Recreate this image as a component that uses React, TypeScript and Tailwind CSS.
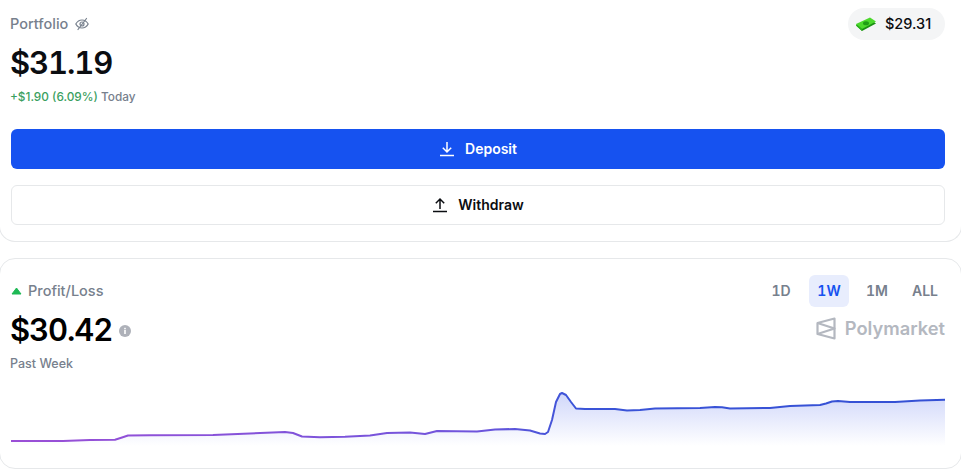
const linePoints: [number, number][] = [
    [11, 441], [63, 441], [90, 440], [115, 439.7], [122, 437.5], [128, 435.5], [150, 435.3], [213, 435], [250, 433.5],
    [285, 432], [293, 433], [302, 436.5], [320, 437.3], [345, 436.8], [370, 435.5], [387, 433], [410, 432.5], [425, 434],
    [437, 431], [477, 431.5], [495, 429.5], [515, 429], [530, 430.5], [540, 433.5], [545, 434], [548, 432], [552, 420],
    [556, 402], [560, 394], [562, 393], [566, 395], [571, 402], [576, 408.5], [585, 409], [615, 409], [627, 410.5],
    [640, 410], [655, 408.5], [700, 408], [715, 407], [722, 407.3], [730, 408.5], [770, 408], [790, 406], [820, 405],
    [826, 403.5], [832, 401.5], [838, 401], [850, 402], [895, 402], [920, 400.5], [945, 399.8],
];

const TOP = 380;
const linePath = linePoints.map(([x, y], i) => `${i === 0 ? 'M' : 'L'}${x} ${y - TOP}`).join(' ');
const areaPath = `${linePath} L945 66 L11 66 Z`;

function PnlChart() {
    return (
        <svg width="961" height="70" viewBox="0 0 961 70" className="block">
            <defs>
                <linearGradient id="stroke" gradientUnits="userSpaceOnUse" x1="11" y1="0" x2="945" y2="0">
                    <stop offset="0" stopColor="#9b4fd6" />
                    <stop offset="0.5" stopColor="#6f55dc" />
                    <stop offset="0.6" stopColor="#3b54d8" />
                    <stop offset="1" stopColor="#3450d4" />
                </linearGradient>
                <linearGradient id="fill" gradientUnits="userSpaceOnUse" x1="0" y1="12" x2="0" y2="66">
                    <stop offset="0" stopColor="#cfd6fa" />
                    <stop offset="1" stopColor="#ffffff" />
                </linearGradient>
            </defs>
            <path d={areaPath} fill="url(#fill)" />
            <path d={linePath} fill="none" stroke="url(#stroke)" strokeWidth="2" strokeLinejoin="round" />
        </svg>
    );
}

function CashIcon() {
    return (
        <svg width="22" height="16" viewBox="0 0 22 16">
            <path d="M1 9.5 L15 3 L21 7.5 L7 15 Z" fill="#1a8f12" />
            <path d="M1 8 L15 1.5 L21 5.5 L7 13 Z" fill="#4cd92c" />
            <ellipse cx="11" cy="7.2" rx="3" ry="2" fill="#1f9e14" />
            <path d="M1 8 L7 13 L7 15 L1 9.5 Z" fill="#2bb51c" />
        </svg>
    );
}

function PolymarketLogo() {
    return (
        <svg width="20" height="23" viewBox="0 0 20 23" fill="none" stroke="#b4b8c0" strokeWidth="2.2" strokeLinejoin="round">
            <path d="M1.5 6 L18.5 1.5 V21.5 L1.5 17 Z" />
            <path d="M1.5 6 L18.5 11.5 L1.5 17" />
        </svg>
    );
}

function HiddenEye() {
    return (
        <svg width="14" height="14" viewBox="0 0 14 14" fill="none" stroke="#77808d" strokeWidth="1.2" strokeLinecap="round">
            <path d="M0.8 7 C2.5 4 4.5 3 7 3 C9.5 3 11.5 4 13.2 7 C11.5 10 9.5 11 7 11 C4.5 11 2.5 10 0.8 7 Z" />
            <circle cx="7" cy="7" r="2" />
            <path d="M3 12.5 L11.5 1.5" />
        </svg>
    );
}

function TrayArrow({ up }: { up?: boolean }) {
    return (
        <svg width="16" height="16" viewBox="0 0 16 16" fill="none" stroke="currentColor" strokeWidth="1.5">
            {up ? <path d="M8 12 V2 M3.8 6.2 L8 2 L12.2 6.2" /> : <path d="M8 1 V11 M3.8 6.8 L8 11 L12.2 6.8" />}
            <path d="M1 14.5 H15" />
        </svg>
    );
}

export default function App() {
    return (
        <div className="w-[961px] h-[473px] overflow-hidden bg-white font-['Inter',sans-serif]">
            <div className="-mx-px h-[242px] border-b border-x border-[#e6e8ea] rounded-b-2xl pl-[11px] pr-[16px] pt-[12px]">
                <div className="flex justify-between items-start">
                    <div className="-ml-px">
                        <div className="flex items-center gap-[7px] h-[24px] text-[14.5px] font-medium text-[#77808d]">
                            Portfolio
                            <HiddenEye />
                        </div>
                        <div className="mt-[3px] h-[48px] flex items-center text-[31px] font-semibold text-[#0b0d11] tabular-nums tracking-[-1.1px]">$31.19</div>
                        <div className="mt-[2px] text-[11.8px] font-medium">
                            <span className="text-[#3b9f5f]">+$1.90 (6.09%)</span> <span className="text-[#77808d]">Today</span>
                        </div>
                    </div>
                    <div className="-mt-[4px] flex items-center gap-[8px] w-[97px] h-[32px] pl-[7px] rounded-full bg-[#f4f5f6] text-[14.5px] font-medium text-[#0b0d11]">
                        <CashIcon />
                        $29.31
                    </div>
                </div>
                <div className="mt-[22px] flex flex-col gap-4">
                    <button className="h-10 rounded-md bg-[#1652f0] text-white text-sm font-semibold flex items-center justify-center gap-[10px]">
                        <TrayArrow />
                        Deposit
                    </button>
                    <button className="h-10 rounded-md border border-[#e6e8ea] text-[#0b0d11] text-sm font-semibold flex items-center justify-center gap-[10px]">
                        <TrayArrow up />
                        Withdraw
                    </button>
                </div>
            </div>

            <div className="-mx-px mt-4 h-[211px] border border-[#e6e8ea] rounded-2xl pt-4">
                <div className="flex justify-between pl-[11px] pr-[16px]">
                    <div>
                        <div className="flex items-center gap-[6px] h-[32px] text-[14.5px] font-medium text-[#77808d]">
                            <svg width="11" height="8" viewBox="0 0 11 8"><path d="M5.5 1 L10 7 H1 Z" fill="#1db954" stroke="#1db954" strokeLinejoin="round" /></svg>
                            Profit/Loss
                        </div>
                        <div className="mt-[3px] -ml-px flex items-center gap-[6px]">
                            <span className="h-[40px] flex items-center text-[31px] font-semibold text-black tabular-nums tracking-[-1.1px]">$30.42</span>
                            <svg width="12" height="12" viewBox="0 0 12 12" className="mt-[2px] ml-px">
                                <circle cx="6" cy="6" r="6" fill="#aeb1b9" />
                                <rect x="5.2" y="5" width="1.6" height="4" fill="#fff" />
                                <rect x="5.2" y="2.8" width="1.6" height="1.5" fill="#fff" />
                            </svg>
                        </div>
                        <div className="mt-[5px] -ml-px text-[12.5px] font-medium text-[#77808d]">Past Week</div>
                    </div>
                    <div className="flex flex-col items-end">
                        <div className="flex items-center text-sm font-semibold text-[#77808d] tabular-nums">
                            <span className="w-10 h-[32px] flex items-center justify-center">1D</span>
                            <span className="ml-2 w-10 h-[32px] flex items-center justify-center rounded-md bg-[#e8edfd] text-[#1652f0]">1W</span>
                            <span className="ml-2 w-10 h-[32px] flex items-center justify-center">1M</span>
                            <span className="ml-2 w-10 h-[32px] flex items-center justify-center">ALL</span>
                        </div>
                        <div className="mt-[8px] flex items-center gap-[9px] text-[18.3px] font-semibold text-[#b4b8c0]">
                            <PolymarketLogo />
                            Polymarket
                        </div>
                    </div>
                </div>
                <div className="mt-[6px]">
                    <PnlChart />
                </div>
            </div>
        </div>
    );
}
